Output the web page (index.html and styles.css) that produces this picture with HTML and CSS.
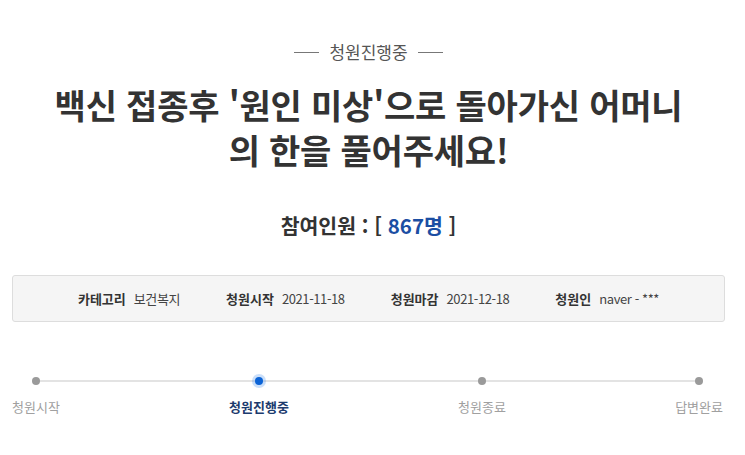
FILE: index.html
```html
<!DOCTYPE html>
<html lang="ko">
<head>
<meta charset="utf-8">
<title>청원진행중</title>
<link rel="stylesheet" href="styles.css">
</head>
<body>
<div class="page">
  <div class="status"><span class="rule"></span><span class="status-text">청원진행중</span><span class="rule"></span></div>
  <h1 class="title">백신 접종후 '원인 미상'으로 돌아가신 어머니<br>의 한을 풀어주세요!</h1>
  <div class="count">참여인원 : [ <span class="num">867명</span> ]</div>
  <div class="info">
    <div class="item"><span class="label">카테고리</span><span class="value">보건복지</span></div>
    <div class="item"><span class="label">청원시작</span><span class="value">2021-11-18</span></div>
    <div class="item"><span class="label">청원마감</span><span class="value">2021-12-18</span></div>
    <div class="item"><span class="label">청원인</span><span class="value">naver - ***</span></div>
  </div>
  <div class="steps">
    <div class="step"><span class="dot"></span><span class="step-label">청원시작</span></div>
    <div class="step active"><span class="dot"></span><span class="step-label">청원진행중</span></div>
    <div class="step"><span class="dot"></span><span class="step-label">청원종료</span></div>
    <div class="step"><span class="dot"></span><span class="step-label">답변완료</span></div>
  </div>
</div>
</body>
</html>
```
FILE: styles.css
```css
html, body {
  margin: 0;
  padding: 0;
  background: #fff;
}
body {
  font-family: "Noto Sans CJK KR", "Noto Sans", sans-serif;
  color: #333;
}
.page {
  padding: 0 20px 0 12px;
}
.status {
  margin-top: 42px;
  display: flex;
  justify-content: center;
  align-items: center;
  gap: 10px;
  height: 20px;
}
.rule {
  width: 25px;
  height: 1px;
  background: #777;
}
.status-text {
  font-size: 17px;
  line-height: 20px;
  color: #555;
}
.title {
  margin: 20px 0 0;
  text-align: center;
  font-size: 34px;
  line-height: 45px;
  font-weight: 700;
  letter-spacing: -0.2px;
  color: #333;
}
.count {
  margin-top: 39px;
  text-align: center;
  font-size: 20.5px;
  line-height: 28px;
  font-weight: 700;
  color: #333;
}
.num {
  color: #1b4ea3;
}
.info {
  margin-top: 36px;
  height: 45px;
  border: 1px solid #ddd;
  border-radius: 3px;
  background: #f5f5f5;
  display: flex;
  justify-content: center;
  align-items: center;
  gap: 46px;
  font-size: 13px;
}
.item {
  display: flex;
  gap: 8px;
  align-items: center;
}
.label {
  font-weight: 700;
  color: #333;
}
.value {
  color: #444;
  letter-spacing: -0.4px;
}
.steps {
  position: relative;
  margin: 55px 2px 0 0;
  display: flex;
  justify-content: space-between;
}
.steps::before {
  content: "";
  position: absolute;
  left: 22px;
  right: 22px;
  top: 3px;
  height: 2px;
  background: #e3e3e3;
}
.step {
  position: relative;
  display: flex;
  flex-direction: column;
  align-items: center;
  gap: 13px;
}
.dot {
  width: 8px;
  height: 8px;
  border-radius: 50%;
  background: #9a9a9a;
}
.step.active .dot {
  background: #0b63d6;
  box-shadow: 0 0 0 3px rgba(80, 150, 240, 0.3);
}
.step-label {
  font-size: 13px;
  line-height: 18px;
  color: #a0a0a0;
}
.step.active .step-label {
  color: #1c3b6e;
  font-weight: 700;
}
```
